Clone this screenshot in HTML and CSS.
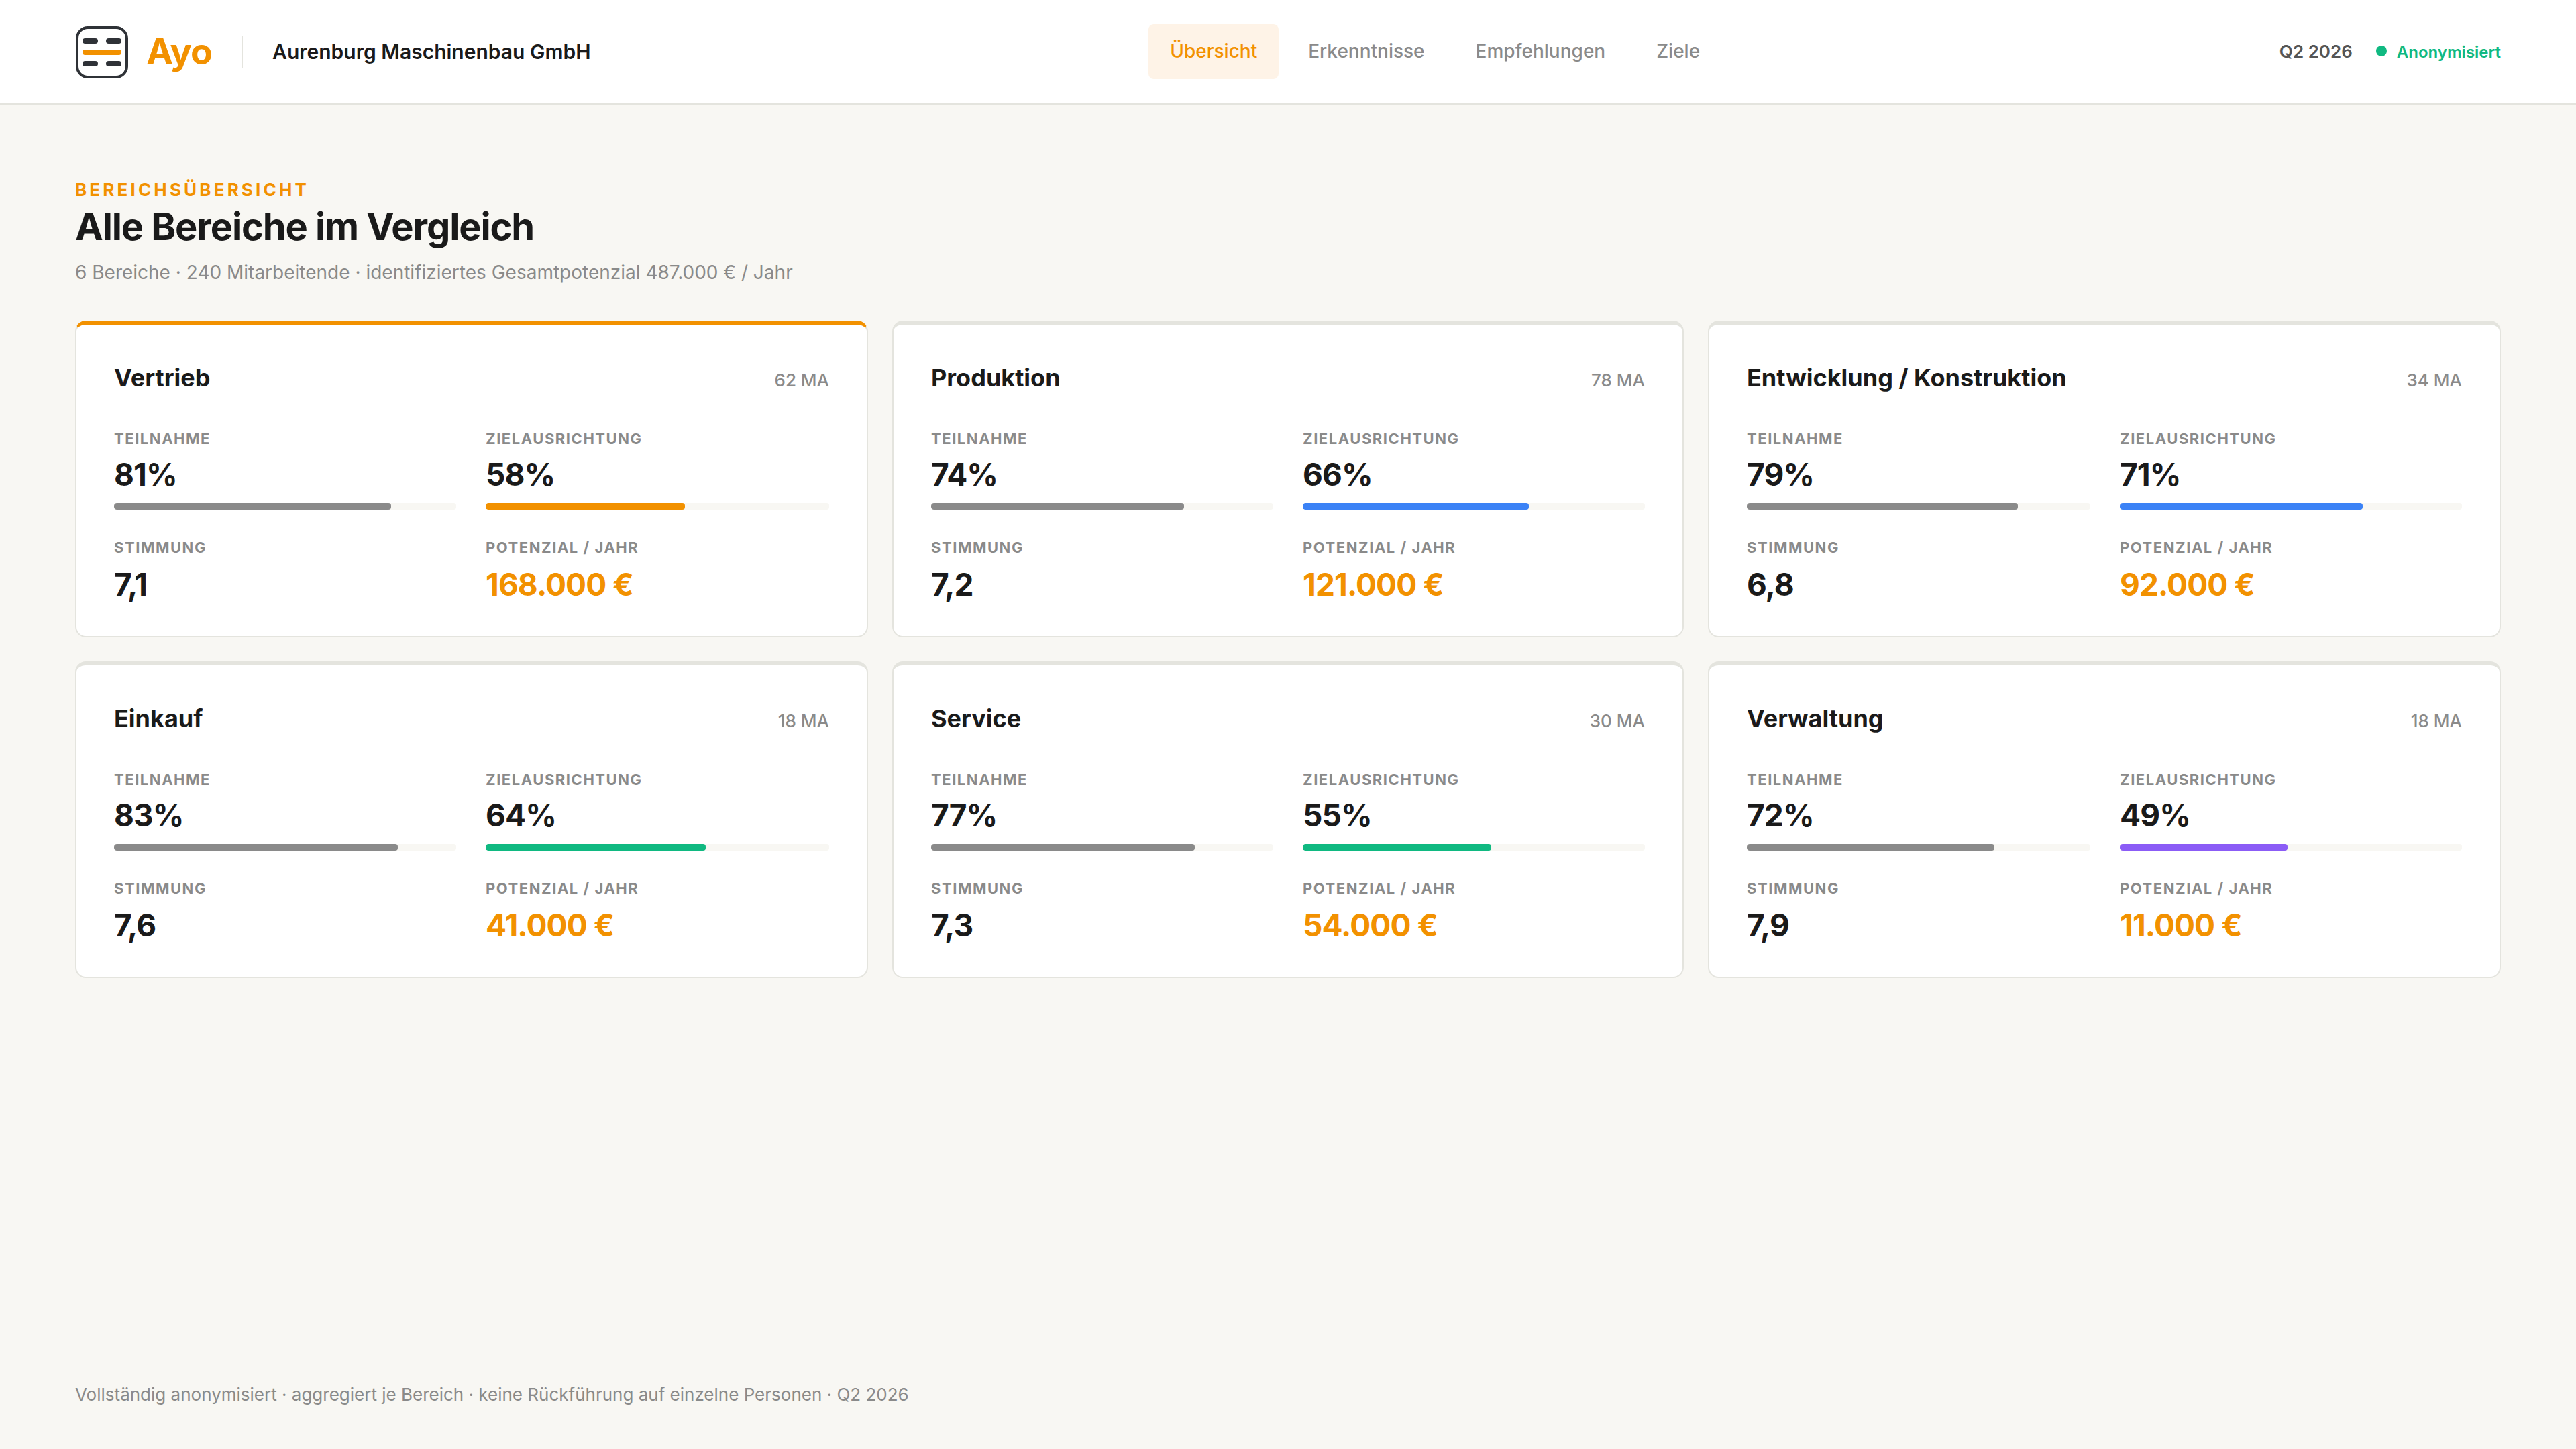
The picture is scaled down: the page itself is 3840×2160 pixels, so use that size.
FILE: index.html
```html
<!DOCTYPE html>
<html lang="de">
<head>
<meta charset="utf-8">
<title>Ayo – Bereichsübersicht</title>
<link rel="stylesheet" href="styles.css">
</head>
<body>
<header class="header">
  <div class="brand">
    <svg class="logo" viewBox="0 0 80 80" aria-hidden="true">
      <rect x="3" y="3" width="74" height="74" rx="16" fill="none" stroke="#2f3237" stroke-width="4"/>
      <g fill="#2f3237">
        <rect x="11" y="19" width="23" height="8" rx="4"/>
        <rect x="46" y="19" width="23" height="8" rx="4"/>
        <rect x="11" y="53" width="23" height="8" rx="4"/>
        <rect x="46" y="53" width="23" height="8" rx="4"/>
      </g>
      <rect x="11" y="36" width="58" height="8" rx="4" fill="#f29100"/>
    </svg>
    <span class="brand-name">Ayo</span>
    <span class="divider"></span>
    <span class="company">Aurenburg Maschinenbau GmbH</span>
  </div>
  <nav class="nav">
    <a class="nav-item active">Übersicht</a>
    <a class="nav-item">Erkenntnisse</a>
    <a class="nav-item">Empfehlungen</a>
    <a class="nav-item">Ziele</a>
  </nav>
  <div class="status">
    <span class="period">Q2 2026</span>
    <span class="anon"><i class="dot"></i>Anonymisiert</span>
  </div>
</header>
<main class="main">
  <div class="eyebrow">BEREICHSÜBERSICHT</div>
  <h1 class="title">Alle Bereiche im Vergleich</h1>
  <p class="subtitle">6 Bereiche · 240 Mitarbeitende · identifiziertes Gesamtpotenzial 487.000 € / Jahr</p>
  <section class="grid">
    <article class="card top">
      <div class="card-head"><h2 class="card-title">Vertrieb</h2><span class="staff">62 MA</span></div>
      <div class="metrics">
        <div class="metric"><div class="label">TEILNAHME</div><div class="value">81%</div><div class="bar"><div class="fill grey" style="width:81%"></div></div></div>
        <div class="metric"><div class="label">ZIELAUSRICHTUNG</div><div class="value">58%</div><div class="bar"><div class="fill orange" style="width:58%"></div></div></div>
        <div class="metric plain"><div class="label">STIMMUNG</div><div class="value">7,1</div></div>
        <div class="metric plain"><div class="label">POTENZIAL / JAHR</div><div class="value money">168.000 €</div></div>
      </div>
    </article>
    <article class="card">
      <div class="card-head"><h2 class="card-title">Produktion</h2><span class="staff">78 MA</span></div>
      <div class="metrics">
        <div class="metric"><div class="label">TEILNAHME</div><div class="value">74%</div><div class="bar"><div class="fill grey" style="width:74%"></div></div></div>
        <div class="metric"><div class="label">ZIELAUSRICHTUNG</div><div class="value">66%</div><div class="bar"><div class="fill blue" style="width:66%"></div></div></div>
        <div class="metric plain"><div class="label">STIMMUNG</div><div class="value">7,2</div></div>
        <div class="metric plain"><div class="label">POTENZIAL / JAHR</div><div class="value money">121.000 €</div></div>
      </div>
    </article>
    <article class="card">
      <div class="card-head"><h2 class="card-title">Entwicklung / Konstruktion</h2><span class="staff">34 MA</span></div>
      <div class="metrics">
        <div class="metric"><div class="label">TEILNAHME</div><div class="value">79%</div><div class="bar"><div class="fill grey" style="width:79%"></div></div></div>
        <div class="metric"><div class="label">ZIELAUSRICHTUNG</div><div class="value">71%</div><div class="bar"><div class="fill blue" style="width:71%"></div></div></div>
        <div class="metric plain"><div class="label">STIMMUNG</div><div class="value">6,8</div></div>
        <div class="metric plain"><div class="label">POTENZIAL / JAHR</div><div class="value money">92.000 €</div></div>
      </div>
    </article>
    <article class="card">
      <div class="card-head"><h2 class="card-title">Einkauf</h2><span class="staff">18 MA</span></div>
      <div class="metrics">
        <div class="metric"><div class="label">TEILNAHME</div><div class="value">83%</div><div class="bar"><div class="fill grey" style="width:83%"></div></div></div>
        <div class="metric"><div class="label">ZIELAUSRICHTUNG</div><div class="value">64%</div><div class="bar"><div class="fill green" style="width:64%"></div></div></div>
        <div class="metric plain"><div class="label">STIMMUNG</div><div class="value">7,6</div></div>
        <div class="metric plain"><div class="label">POTENZIAL / JAHR</div><div class="value money">41.000 €</div></div>
      </div>
    </article>
    <article class="card">
      <div class="card-head"><h2 class="card-title">Service</h2><span class="staff">30 MA</span></div>
      <div class="metrics">
        <div class="metric"><div class="label">TEILNAHME</div><div class="value">77%</div><div class="bar"><div class="fill grey" style="width:77%"></div></div></div>
        <div class="metric"><div class="label">ZIELAUSRICHTUNG</div><div class="value">55%</div><div class="bar"><div class="fill green" style="width:55%"></div></div></div>
        <div class="metric plain"><div class="label">STIMMUNG</div><div class="value">7,3</div></div>
        <div class="metric plain"><div class="label">POTENZIAL / JAHR</div><div class="value money">54.000 €</div></div>
      </div>
    </article>
    <article class="card">
      <div class="card-head"><h2 class="card-title">Verwaltung</h2><span class="staff">18 MA</span></div>
      <div class="metrics">
        <div class="metric"><div class="label">TEILNAHME</div><div class="value">72%</div><div class="bar"><div class="fill grey" style="width:72%"></div></div></div>
        <div class="metric"><div class="label">ZIELAUSRICHTUNG</div><div class="value">49%</div><div class="bar"><div class="fill purple" style="width:49%"></div></div></div>
        <div class="metric plain"><div class="label">STIMMUNG</div><div class="value">7,9</div></div>
        <div class="metric plain"><div class="label">POTENZIAL / JAHR</div><div class="value money">11.000 €</div></div>
      </div>
    </article>
  </section>
</main>
<footer class="footer">Vollständig anonymisiert · aggregiert je Bereich · keine Rückführung auf einzelne Personen · Q2 2026</footer>
</body>
</html>
```
FILE: styles.css
```css
:root {
  --orange: #f29100;
  --ink: #1a1a1a;
  --muted: #8a8a8a;
  --line: #e4e4de;
  --paper: #f8f7f3;
}
* { box-sizing: border-box; margin: 0; padding: 0; }
body {
  width: 3840px;
  height: 2160px;
  display: flex;
  flex-direction: column;
  overflow: hidden;
  background: var(--paper);
  color: var(--ink);
  font-family: Inter, "Liberation Sans", sans-serif;
}

.header {
  height: 156px;
  padding: 0 112px;
  display: flex;
  align-items: center;
  justify-content: space-between;
  background: #fff;
  border-bottom: 2px solid var(--line);
}
.brand { display: flex; align-items: center; height: 80px; margin-top: 2px; }
.logo { width: 80px; height: 80px; margin-right: 26px; }
.brand-name { font-size: 54px; line-height: 66px; font-weight: 700; letter-spacing: -0.02em; color: var(--orange); margin-top: -2px; }
.divider { width: 2px; height: 48px; margin: 0 44px; background: var(--line); }
.company { font-size: 30px; line-height: 36px; font-weight: 600; margin-top: -2px; }

.nav { display: flex; gap: 12px; }
.nav-item { padding: 23px 32px 25px; border-radius: 8px; font-size: 28px; line-height: 34px; font-weight: 500; color: var(--muted); }
.nav-item.active { background: #fef3e7; color: var(--orange); }

.status { display: flex; align-items: center; gap: 35px; }
.period { font-size: 26px; line-height: 32px; font-weight: 600; color: #555; }
.anon { display: flex; align-items: center; gap: 15px; margin-top: 1px; font-size: 24px; line-height: 29px; font-weight: 600; color: #10b981; }
.dot { width: 16px; height: 16px; border-radius: 50%; background: #10b981; margin-bottom: 3px; }

.main { flex: 1; padding: 111px 112px 0; }
.eyebrow { font-size: 26px; line-height: 31px; font-weight: 700; letter-spacing: 0.16em; color: var(--orange); }
.title { margin-top: 6px; font-size: 56px; line-height: 68px; font-weight: 700; letter-spacing: -0.02em; }
.subtitle { margin-top: 17px; font-size: 28px; line-height: 34px; color: var(--muted); }

.grid { margin-top: 55px; display: grid; grid-template-columns: 1182px 1180px 1182px; gap: 36px; }
.card { height: 472px; padding: 57px 56px 0; background: #fff; border: 2px solid var(--line); border-top-width: 6px; border-radius: 16px; }
.card.top { border-top-color: var(--orange); }
.card-head { display: flex; align-items: baseline; justify-content: space-between; height: 44px; }
.card-title { font-size: 36px; line-height: 44px; font-weight: 700; }
.staff { font-size: 26px; line-height: 31px; font-weight: 500; color: var(--muted); }

.metrics { margin-top: 56px; display: grid; grid-template-columns: 510px 1fr; column-gap: 44px; row-gap: 43px; }
.card:nth-child(3n) .metrics { grid-template-columns: 512px 1fr; }
.label { font-size: 22px; line-height: 26px; font-weight: 700; letter-spacing: 0.07em; color: var(--muted); }
.value { margin-top: 12px; font-size: 46px; line-height: 56px; font-weight: 700; letter-spacing: -0.02em; }
.plain .value { margin-top: 14px; }
.value.money { color: var(--orange); }
.bar { margin-top: 15px; height: 10px; border-radius: 4px; background: var(--paper); overflow: hidden; }
.fill { height: 100%; border-radius: 4px; }
.grey { background: var(--muted); }
.orange { background: var(--orange); }
.blue { background: #3b82f6; }
.green { background: #10b981; }
.purple { background: #8b5cf6; }

.footer { padding: 0 112px 66px; font-size: 26px; line-height: 31px; color: var(--muted); }
```
